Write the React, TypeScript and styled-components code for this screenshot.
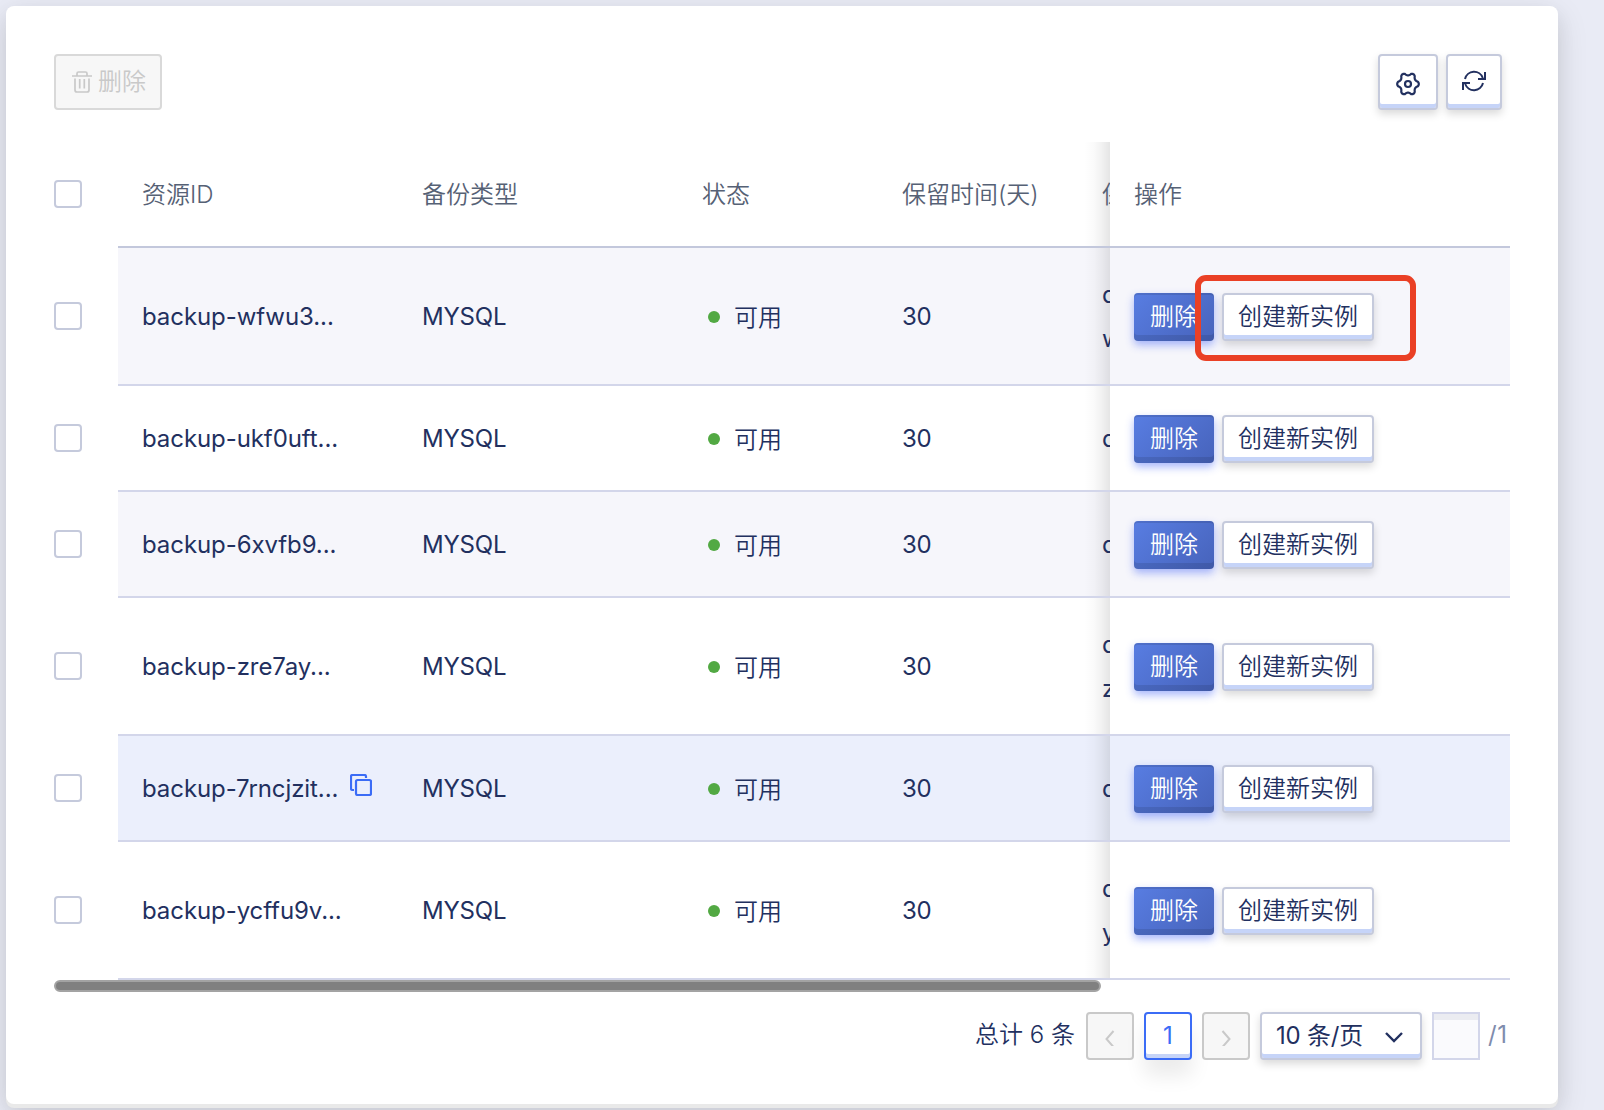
import React from "react";
import styled, { createGlobalStyle } from "styled-components";

const Global = createGlobalStyle`
  *, *::before, *::after { box-sizing: border-box; }
  body {
    margin: 0;
    overflow: hidden;
    background: #e9ebf5;
    color: #22305f;
    font-family: Inter, "Noto Sans CJK SC", sans-serif;
    font-size: 24px;
    line-height: 44px;
  }
  button { font: inherit; cursor: pointer; }
`;

const Page = styled.div`
  height: 1110px;
  padding: 6px 46px 6px 6px;
  overflow: hidden;
`;

const Card = styled.main`
  height: 1098px;
  padding: 48px;
  background: #fff;
  border-radius: 8px;
  box-shadow: 0 4px 0 #e9e9e9, 0 10px 32px rgba(0, 0, 0, 0.12), 0 8px 20px rgba(0, 0, 0, 0.06);
`;

const Toolbar = styled.div`
  display: flex;
  justify-content: space-between;
  height: 56px;
  padding-right: 8px;
  margin-bottom: 32px;
`;

const Tools = styled.div`
  display: flex;
  gap: 8px;
`;

const DisabledButton = styled.button`
  display: flex;
  align-items: center;
  gap: 5px;
  width: 108px;
  height: 56px;
  padding: 0 0 0 15px;
  border: 2px solid #d9d9d9;
  border-radius: 4px;
  background: #f7f7f7;
  color: #c9c9c9;
  font-weight: 350;
`;

const IconButton = styled.button<{ $width: number; $shift: number }>`
  display: flex;
  align-items: center;
  justify-content: center;
  width: ${(p) => p.$width}px;
  height: 56px;
  padding: ${(p) => Math.max(p.$shift, 0)}px 0 ${(p) => Math.max(-p.$shift, 0)}px;
  border: 2px solid #c5cadc;
  border-radius: 4px;
  background: #fff;
  color: #22305f;
  box-shadow: inset 0 -4px 0 #c6d4f8, 0 4px 8px rgba(0, 0, 0, 0.15);
`;

const Table = styled.div`
  display: flex;
  flex-direction: column;
`;

const Row = styled.div<{ $tall?: boolean }>`
  display: flex;
  height: ${(p) => (p.$tall ? 138 : 106)}px;
`;

const CheckCell = styled.div`
  display: flex;
  align-items: center;
  width: 64px;
  padding-bottom: 2px;
`;

const Checkbox = styled.span`
  width: 28px;
  height: 28px;
  border: 2px solid #c5cadc;
  border-radius: 4px;
  background: #fff;
`;

const Cells = styled.div<{ $bg: string; $header?: boolean }>`
  display: flex;
  width: 1392px;
  background: ${(p) => p.$bg};
  border-bottom: 2px solid ${(p) => (p.$header ? "#c3c8dc" : "#d3d6ea")};
  color: ${(p) => (p.$header ? "#566175" : "#22305f")};
  font-weight: ${(p) => (p.$header ? 360 : 400)};
`;

const Scrolling = styled.div`
  display: flex;
  width: 992px;
  overflow: hidden;
  background-image: linear-gradient(to left, rgba(0, 0, 0, 0.1), rgba(0, 0, 0, 0.055) 8px, rgba(0, 0, 0, 0.018) 16px, transparent 26px);
`;

const Cell = styled.div<{ $width: number }>`
  display: flex;
  flex: none;
  align-items: center;
  width: ${(p) => p.$width}px;
  padding: 2px 0 0 24px;
  white-space: pre;
`;

const ResourceId = styled.span`
  font-weight: 390;
  letter-spacing: -0.08px;
`;

const Plain = styled.span`
  font-weight: 390;
  letter-spacing: -0.2px;
`;

const CopyButton = styled.button`
  display: flex;
  margin: 0 0 8px 12px;
  padding: 0;
  border: 0;
  background: none;
  color: #3b6cf6;
`;

const Dot = styled.span`
  width: 12px;
  height: 12px;
  margin: 0 14px 0 6px;
  border-radius: 50%;
  background: #52a943;
`;

const Status = styled.span`
  padding-top: 2px;
  font-weight: 350;
`;

const Actions = styled.div`
  display: flex;
  flex: 1;
  align-items: center;
  gap: 8px;
  padding: 2px 0 0 24px;
  position: relative;
`;

const ActionButton = styled.button<{ $primary?: boolean }>`
  width: ${(p) => (p.$primary ? 80 : 152)}px;
  height: 48px;
  padding: 0 0 1px;
  border: ${(p) => (p.$primary ? "0" : "2px solid #c5cadc")};
  border-radius: 4px;
  background: ${(p) => (p.$primary ? "linear-gradient(135deg, #587de2, #4763bb)" : "#fff")};
  color: ${(p) => (p.$primary ? "#fff" : "#22305f")};
  box-shadow: ${(p) =>
    p.$primary
      ? "inset 0 2px 0 rgba(0, 0, 0, 0.1), inset 0 -6px 0 rgba(0, 0, 0, 0.1), 0 4px 8px rgba(59, 93, 246, 0.45)"
      : "inset 0 -4px 0 #c6d4f8, 0 4px 8px rgba(0, 0, 0, 0.15)"};
  font-weight: 350;
  line-height: 40px;
  white-space: nowrap;
`;

const Highlight = styled.div`
  position: absolute;
  left: 85px;
  top: 27px;
  width: 221px;
  height: 86px;
  border: 6px solid #ea4025;
  border-radius: 11px;
`;

const ScrollThumb = styled.div`
  width: 1047px;
  height: 12px;
  border: 2px solid #a3a3a3;
  border-radius: 6px;
  background: #808080;
`;

const Pagination = styled.nav`
  display: flex;
  align-items: center;
  justify-content: flex-end;
  gap: 10px;
  height: 48px;
  margin-top: 20px;
  padding-right: 3px;
`;

const Total = styled.span`
  margin: 0 1px 2px 0;
  white-space: pre;
  font-weight: 360;
`;

const PageButton = styled.button<{ $active?: boolean }>`
  display: flex;
  align-items: center;
  justify-content: center;
  width: 48px;
  height: 48px;
  padding: 0;
  border: 2px solid ${(p) => (p.$active ? "#3b6cf6" : "#c9c9c9")};
  border-radius: 4px;
  background: ${(p) => (p.$active ? "#fff" : "#f7f7f7")};
  color: ${(p) => (p.$active ? "#3b6cf6" : "#c9c9c9")};
  box-shadow: ${(p) => (p.$active ? "inset 0 -4px 0 #c6d4f8, 0 16px 20px rgba(0, 0, 0, 0.08)" : "none")};
  font-weight: 400;
`;

const Select = styled.button`
  display: flex;
  align-items: center;
  justify-content: space-between;
  width: 162px;
  height: 48px;
  padding: 0 16px 0 14px;
  border: 2px solid #c5cadc;
  border-radius: 4px;
  background: #fff;
  color: #22305f;
  box-shadow: inset 0 -4px 0 #c6d4f8, 0 4px 8px rgba(0, 0, 0, 0.15);
  white-space: pre;
  font-weight: 370;
`;

const SelectLabel = styled.span`
  letter-spacing: -0.2px;
`;

const PageInput = styled.input`
  width: 48px;
  height: 48px;
  border: 2px solid #d3d6ea;
  background: #fafafd;
  box-shadow: inset 0 6px 0 #ebecf1;
`;

const PageCount = styled.span`
  width: 19px;
  margin: 0 0 2px -2px;
  color: #7f8cad;
  font-weight: 400;
  letter-spacing: 0.5px;
`;

const TrashIcon = () => (
  <svg width="22" height="24" viewBox="0 0 22 24" fill="none" stroke="currentColor" strokeWidth="1.7">
    <path d="M1 6h20M6 6V3.500a1.500 1.500 0 0 1 1.500-1.500h7A1.500 1.500 0 0 1 16 3.500V6M4 8.500V20a2 2 0 0 0 2 2h10a2 2 0 0 0 2-2V8.500M8.700 9v9.500M13.300 9v9.500" />
  </svg>
);

// Six rounded lobes around the centre, sampled every four degrees.
const gearOutline = Array.from({ length: 90 }, (_, i) => {
  const angle = (i * 4 * Math.PI) / 180;
  const wave = Math.cos(6 * angle);
  const radius = 9.5 + 1.3 * Math.sign(wave) * Math.pow(Math.abs(wave), 0.7);
  return `${(12 + radius * Math.cos(angle)).toFixed(2)},${(12 + 1.05 * radius * Math.sin(angle)).toFixed(2)}`;
}).join(" ");

const GearIcon = () => (
  <svg width="24" height="24" viewBox="0 0 24 24" fill="none" stroke="currentColor" strokeWidth="2.2" strokeLinejoin="round">
    <polygon points={gearOutline} />
    <circle cx="12" cy="12" r="3" />
  </svg>
);

const RefreshIcon = () => (
  <svg width="24" height="22" viewBox="0 0 24 22" fill="none" stroke="currentColor" strokeWidth="2">
    <path d="M3 9A9.300 9.300 0 0 1 20.800 8M23 2v7h-7M21 13A9.300 9.300 0 0 1 3.200 14M1 20v-7h7" />
  </svg>
);

const CopyIcon = () => (
  <svg width="22" height="22" viewBox="0 0 22 22" fill="none" stroke="currentColor" strokeWidth="2.2">
    <rect x="6" y="6" width="15" height="15" rx="1.500" />
    <path d="M4 16H2.500A1.500 1.500 0 0 1 1 14.500V2.500A1.500 1.500 0 0 1 2.500 1h12A1.500 1.500 0 0 1 16 2.500V4" />
  </svg>
);

const Chevron = ({ d, size = 2 }: { d: string; size?: number }) => (
  <svg width="20" height="20" viewBox="0 0 20 20" fill="none" stroke="currentColor" strokeWidth={size}>
    <path d={d} />
  </svg>
);

const rows = [
  { id: "backup-wfwu3...", tail: "d\nw", bg: "#f6f6fb", marked: true },
  { id: "backup-ukf0uft...", tail: "d", bg: "#fff" },
  { id: "backup-6xvfb9...", tail: "d", bg: "#f6f6fb" },
  { id: "backup-zre7ay...", tail: "d\nz", bg: "#fff" },
  { id: "backup-7rncjzit...", tail: "d", bg: "#ebeffc", copy: true },
  { id: "backup-ycffu9v...", tail: "d\ny", bg: "#fff" },
];

export default function App() {
  return (
    <>
      <Global />
      <Page>
        <Card>
          <Toolbar>
            <DisabledButton>
              <TrashIcon />
              删除
            </DisabledButton>
            <Tools>
              <IconButton $width={60} $shift={4}>
                <GearIcon />
              </IconButton>
              <IconButton $width={56} $shift={-2}>
                <RefreshIcon />
              </IconButton>
            </Tools>
          </Toolbar>
          <Table>
            <Row>
              <CheckCell>
                <Checkbox />
              </CheckCell>
              <Cells $bg="#fff" $header>
                <Scrolling>
                  <Cell $width={280}>资源ID</Cell>
                  <Cell $width={280}>备份类型</Cell>
                  <Cell $width={200}>状态</Cell>
                  <Cell $width={200}>保留时间(天)</Cell>
                  <Cell $width={200}>保</Cell>
                </Scrolling>
                <Actions>操作</Actions>
              </Cells>
            </Row>
            {rows.map((row) => (
              <Row key={row.id} $tall={row.tail.length > 1}>
                <CheckCell>
                  <Checkbox />
                </CheckCell>
                <Cells $bg={row.bg}>
                  <Scrolling>
                    <Cell $width={280}>
                      <ResourceId>{row.id}</ResourceId>
                      {row.copy && (
                        <CopyButton>
                          <CopyIcon />
                        </CopyButton>
                      )}
                    </Cell>
                    <Cell $width={280}>
                      <Plain>MYSQL</Plain>
                    </Cell>
                    <Cell $width={200}>
                      <Dot />
                      <Status>可用</Status>
                    </Cell>
                    <Cell $width={200}>
                      <Plain>30</Plain>
                    </Cell>
                    <Cell $width={200}>
                      <Plain>{row.tail}</Plain>
                    </Cell>
                  </Scrolling>
                  <Actions>
                    <ActionButton $primary>删除</ActionButton>
                    <ActionButton>创建新实例</ActionButton>
                    {row.marked && <Highlight />}
                  </Actions>
                </Cells>
              </Row>
            ))}
          </Table>
          <ScrollThumb />
          <Pagination>
            <Total>总计 6 条</Total>
            <PageButton>
              <Chevron d="M13.500 5L6.500 13l7 8" />
            </PageButton>
            <PageButton $active>1</PageButton>
            <PageButton>
              <Chevron d="M6.500 5l7 8-7 8" />
            </PageButton>
            <Select>
              <SelectLabel>10 条/页</SelectLabel>
              <Chevron d="M2 7l8 8 8-8" size={2.4} />
            </Select>
            <PageInput />
            <PageCount>/1</PageCount>
          </Pagination>
        </Card>
      </Page>
    </>
  );
}
